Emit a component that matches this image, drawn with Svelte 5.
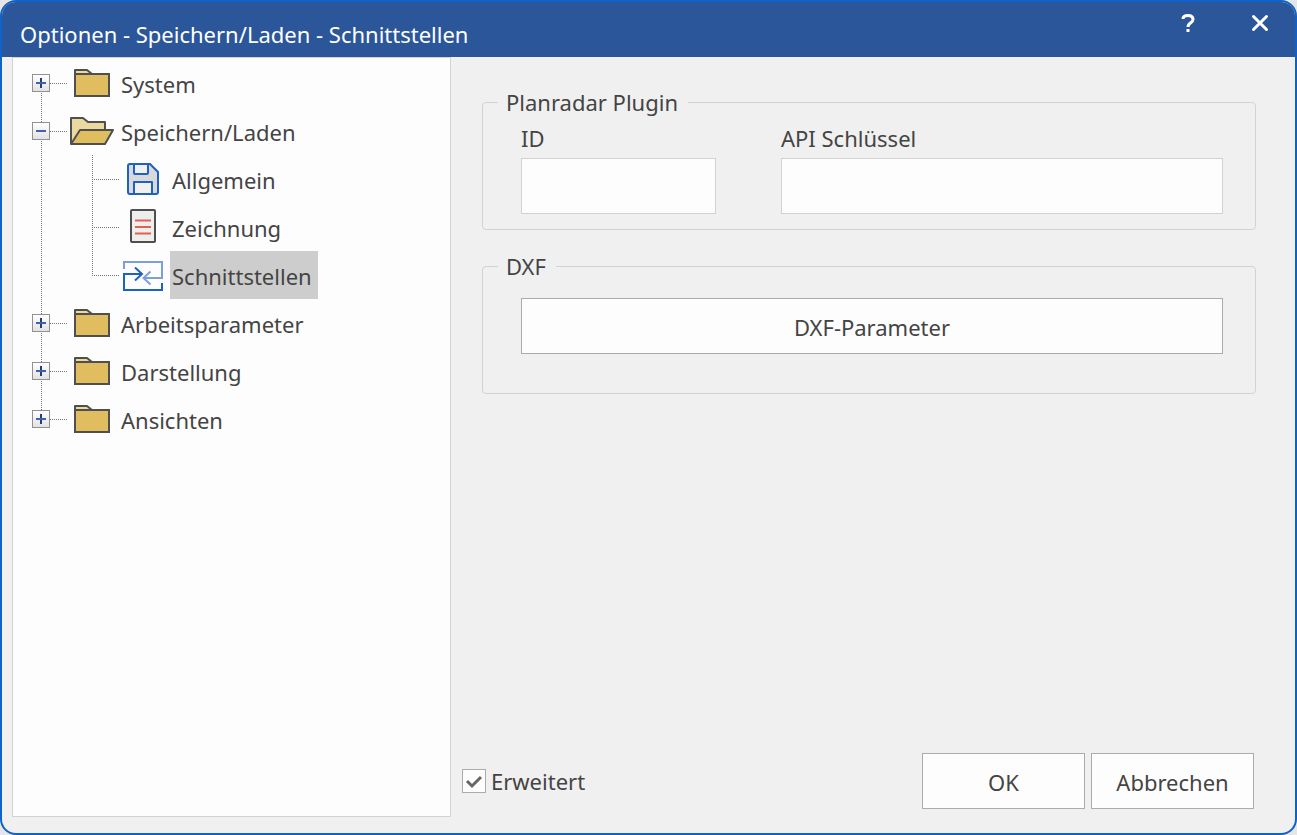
<script>
	let tree = $state([
		{ label: 'System', open: false, children: [] },
		{
			label: 'Speichern/Laden',
			open: true,
			children: [
				{ label: 'Allgemein', icon: 'disk' },
				{ label: 'Zeichnung', icon: 'page' },
				{ label: 'Schnittstellen', icon: 'interface' }
			]
		},
		{ label: 'Arbeitsparameter', open: false, children: [] },
		{ label: 'Darstellung', open: false, children: [] },
		{ label: 'Ansichten', open: false, children: [] }
	]);

	let selected = $state('Schnittstellen');
	let id = $state('');
	let apiKey = $state('');
	let advanced = $state(true);
</script>

{#snippet icon(name)}
	<svg class="icon" width="44" height="40" viewBox="0 0 44 40" aria-hidden="true">
		{#if name === 'folder'}
			<path d="M5 11V7h12l5 4" fill="#ecd9a0" stroke="#4f4f4f" stroke-width="2" stroke-linejoin="round" />
			<rect x="5" y="11" width="34" height="22" fill="#e0be60" stroke="#4f4f4f" stroke-width="2" />
		{:else if name === 'open'}
			<path d="M1 33V7h12l5 4h17v9" fill="#ecd9a0" stroke="#4f4f4f" stroke-width="2" stroke-linejoin="round" />
			<path d="M1 33L10 19h33l-8 14z" fill="#e0be60" stroke="#4f4f4f" stroke-width="2" stroke-linejoin="round" />
		{:else if name === 'disk'}
			<path d="M9 5h20l8 8v20a2 2 0 0 1-2 2H9a2 2 0 0 1-2-2V7a2 2 0 0 1 2-2z" fill="#d9d9d9" stroke="#1f60c4" stroke-width="2" />
			<path d="M13 5h14v9a1 1 0 0 1-1 1H14a1 1 0 0 1-1-1z" fill="#f0f0f0" stroke="#1f60c4" stroke-width="2" />
			<path d="M13 35V23h18v12z" fill="#f0f0f0" stroke="#1f60c4" stroke-width="2" stroke-linejoin="round" />
		{:else if name === 'page'}
			<rect x="10" y="3" width="24" height="32" rx="1" fill="#eee" stroke="#4f4f4f" stroke-width="2" />
			<path d="M14 13.5h16M14 20h16M14 26.5h16" stroke="#e2604f" stroke-width="2" />
		{:else}
			<path d="M3 14V7h38v16H23" fill="none" stroke="#7ba0dd" stroke-width="2" />
			<path d="M29.5 16.500l-7 6.500 7 6.500" fill="none" stroke="#7ba0dd" stroke-width="2" />
			<path d="M21 19H3v16h38v-7" fill="none" stroke="#1f60c4" stroke-width="2" />
			<path d="M14 12.500l7 6.500-7 6.500" fill="none" stroke="#1f60c4" stroke-width="2" />
		{/if}
	</svg>
{/snippet}

<div class="dialog" role="dialog" aria-labelledby="dialog-title">
	<header class="titlebar">
		<h1 id="dialog-title">Optionen - Speichern/Laden - Schnittstellen</h1>
		<div class="window-buttons">
			<button type="button" class="window-button" aria-label="Hilfe">
				<svg width="20" height="20" viewBox="0 0 20 20" aria-hidden="true">
					<path d="M5 6C5 3.500 7 2.500 10 2.500s5 1.500 5 4c0 3.500-5 3-5 7.500" fill="none" stroke="#fff" stroke-width="3" />
					<rect x="8.500" y="16" width="3" height="3" fill="#fff" />
				</svg>
			</button>
			<button type="button" class="window-button" aria-label="Schließen">
				<svg width="20" height="20" viewBox="0 0 20 20" aria-hidden="true">
					<path d="M3.500 3.500l13 13M16.500 3.500l-13 13" stroke="#fff" stroke-width="3" stroke-linecap="round" />
				</svg>
			</button>
		</div>
	</header>

	<div class="body">
		<nav class="sidebar">
			<ul class="tree">
				{#each tree as node}
					<li>
						<div class="row">
							<button
								type="button"
								class="toggle"
								aria-expanded={node.open}
								aria-label={node.label}
								onclick={() => (node.open = !node.open)}
							>
								<svg width="16" height="16" viewBox="0 0 16 16" aria-hidden="true">
									{#if !node.open}
										<path d="M8 3v10" stroke="#243f7c" stroke-width="2" />
									{/if}
									<path d="M3 8h10" stroke="#4560a8" stroke-width="2" />
								</svg>
							</button>
							<span class="branch"></span>
							{@render icon(node.open ? 'open' : 'folder')}
							<button
								type="button"
								class="label"
								class:selected={selected === node.label}
								onclick={() => (selected = node.label)}>{node.label}</button>
						</div>
						{#if node.open && node.children.length}
							<ul class="children">
								{#each node.children as child}
									<li class="row">
										<span class="branch wide"></span>
										{@render icon(child.icon)}
										<button
											type="button"
											class="label"
											class:selected={selected === child.label}
											onclick={() => (selected = child.label)}>{child.label}</button>
									</li>
								{/each}
							</ul>
						{/if}
					</li>
				{/each}
			</ul>
		</nav>

		<main class="content">
			<fieldset class="group plugin">
				<legend>Planradar Plugin</legend>
				<div class="fields">
					<div class="field">
						<label for="plugin-id">ID</label>
						<input id="plugin-id" type="text" bind:value={id} />
					</div>
					<div class="field">
						<label for="api-key">API Schlüssel</label>
						<input id="api-key" type="text" bind:value={apiKey} />
					</div>
				</div>
			</fieldset>

			<fieldset class="group dxf">
				<legend>DXF</legend>
				<button type="button" class="button">DXF-Parameter</button>
			</fieldset>

			<footer class="footer">
				<label class="check">
					<input type="checkbox" bind:checked={advanced} />
					<span>Erweitert</span>
				</label>
				<div class="actions">
					<button type="button" class="button">OK</button>
					<button type="button" class="button">Abbrechen</button>
				</div>
			</footer>
		</main>
	</div>
</div>

<style>
	:global(body) {
		margin: 0;
		background: #e4e6e8;
	}
	.dialog {
		box-sizing: border-box;
		min-height: 100vh;
		display: flex;
		flex-direction: column;
		border: 2px solid #0f63c8;
		border-radius: 16px;
		overflow: hidden;
		background: #f0f0f0;
		color: #444;
		font-family: 'Noto Sans', 'Open Sans', sans-serif;
		font-size: 22px;
		line-height: 32px;
	}
	button,
	input {
		box-sizing: border-box;
		margin: 0;
		font: inherit;
		color: inherit;
	}

	/* title bar */
	.titlebar {
		display: flex;
		justify-content: space-between;
		height: 55px;
		background: #2b579a;
		color: #fff;
	}
	h1 {
		margin: 0;
		padding: 16px 0 0 18px;
		font-size: 22px;
		font-weight: 400;
	}
	.window-buttons {
		display: flex;
		gap: 2px;
	}
	.window-button {
		display: flex;
		align-items: center;
		justify-content: center;
		width: 70px;
		height: 42px;
		padding: 0;
		border: 0;
		background: none;
	}

	.body {
		flex: 1;
		display: flex;
	}

	/* tree */
	.sidebar {
		box-sizing: border-box;
		width: 439px;
		margin: 0 0 16px 10px;
		padding: 1px 0 0 19px;
		border: 1px solid #d2d2d2;
		background: #fdfdfd;
	}
	.tree,
	.children {
		margin: 0;
		padding: 0;
		list-style: none;
		background-image: repeating-linear-gradient(#777 0 1px, transparent 1px 2px);
		background-repeat: no-repeat;
	}
	.tree {
		background-size: 1px calc(100% - 48px);
		background-position: 9px 24px;
	}
	.children {
		margin-left: 60px;
		background-size: 1px calc(100% - 24px);
	}
	.row {
		display: flex;
		align-items: center;
		height: 48px;
	}
	.toggle {
		display: flex;
		width: 18px;
		height: 18px;
		padding: 0;
		border: 1px solid #919191;
		background: linear-gradient(#fff, #e2e2e2);
	}
	.branch {
		width: 18px;
		height: 1px;
		margin-right: 2px;
		background: repeating-linear-gradient(90deg, #777 0 1px, transparent 1px 2px);
	}
	.branch.wide {
		width: 27px;
	}
	.icon {
		flex: none;
		margin-right: 5px;
	}
	.label {
		height: 48px;
		padding: 2px 6px 0 2px;
		border: 0;
		background: none;
		white-space: nowrap;
	}
	.label.selected {
		background: #cdcdcd;
	}

	/* settings */
	.content {
		flex: 1;
		display: flex;
		flex-direction: column;
		padding: 29px 0 24px;
	}
	.group {
		margin: 0 39px 20px 31px;
		border: 1px solid #d2d2d2;
		border-radius: 4px;
	}
	.plugin {
		padding: 4px 32px 15px 38px;
	}
	.dxf {
		padding: 16px 32px 39px 38px;
	}
	legend {
		margin-left: -23px;
		padding: 0 10px 0 8px;
	}
	.fields {
		display: grid;
		grid-template-columns: 195px 1fr;
		gap: 65px;
	}
	.field {
		display: flex;
		flex-direction: column;
		gap: 4px;
	}
	.field input {
		width: 100%;
		height: 56px;
		padding: 0 12px;
		border: 1px solid #d2d2d2;
		background: #fdfdfd;
	}
	.button {
		width: 100%;
		height: 56px;
		padding: 2px 0 0;
		border: 1px solid #ababab;
		background: #fdfdfd;
	}

	/* bottom row */
	.footer {
		display: flex;
		align-items: center;
		justify-content: space-between;
		margin-top: auto;
		padding: 0 41px 0 11px;
	}
	.check {
		display: flex;
		align-items: center;
		gap: 5px;
	}
	.check input {
		appearance: none;
		width: 24px;
		height: 24px;
		border: 1px solid #ababab;
		background: #fdfdfd;
	}
	.check input:checked {
		background: #fdfdfd url("data:image/svg+xml,%3Csvg xmlns='http://www.w3.org/2000/svg' viewBox='0 0 22 22'%3E%3Cpath d='M4 11l5 5 9-9' fill='none' stroke='%23666' stroke-width='3'/%3E%3C/svg%3E");
	}
	.actions {
		display: flex;
		gap: 6px;
	}
	.actions .button {
		width: 163px;
	}
</style>
